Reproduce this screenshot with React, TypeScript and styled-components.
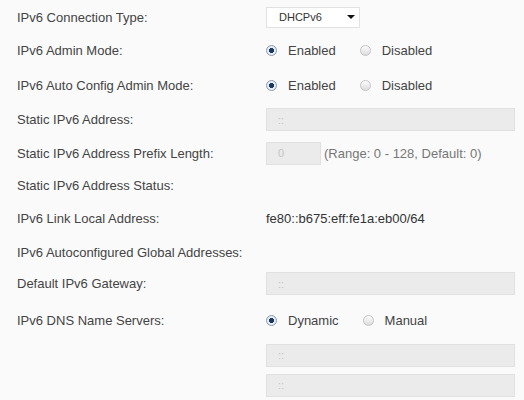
import styled, { createGlobalStyle } from 'styled-components'

const GlobalStyle = createGlobalStyle`
    html, body {
        margin: 0;
        padding: 0;
        background: #fafafa;
    }
    body {
        font-family: "Liberation Sans", Arial, sans-serif;
    }
`

export default function App() {
    return (
        <>
            <GlobalStyle />
            <Form>
                <Row h={34}>
                    <Label>IPv6 Connection Type:</Label>
                    <Select>
                        <span>DHCPv6</span>
                        <Caret />
                    </Select>
                </Row>
                <Row h={33}>
                    <Label>IPv6 Admin Mode:</Label>
                    <RadioGroup>
                        <RadioItem><Radio checked />Enabled</RadioItem>
                        <RadioItem><Radio />Disabled</RadioItem>
                    </RadioGroup>
                </Row>
                <Row h={37}>
                    <Label>IPv6 Auto Config Admin Mode:</Label>
                    <RadioGroup>
                        <RadioItem><Radio checked />Enabled</RadioItem>
                        <RadioItem><Radio />Disabled</RadioItem>
                    </RadioGroup>
                </Row>
                <Row h={31}>
                    <Label>Static IPv6 Address:</Label>
                    <Input w={249}>::</Input>
                </Row>
                <Row h={36}>
                    <Label>Static IPv6 Address Prefix Length:</Label>
                    <Input w={55}>0</Input>
                    <Hint>(Range: 0 - 128, Default: 0)</Hint>
                </Row>
                <Row h={29}>
                    <Label>Static IPv6 Address Status:</Label>
                </Row>
                <Row h={37}>
                    <Label>IPv6 Link Local Address:</Label>
                    <Value>fe80::b675:eff:fe1a:eb00/64</Value>
                </Row>
                <Row h={30}>
                    <Label>IPv6 Autoconfigured Global Addresses:</Label>
                </Row>
                <Row h={33}>
                    <Label>Default IPv6 Gateway:</Label>
                    <Input w={249}>::</Input>
                </Row>
                <Row h={40}>
                    <Label>IPv6 DNS Name Servers:</Label>
                    <RadioGroup>
                        <RadioItem><Radio checked />Dynamic</RadioItem>
                        <RadioItem><Radio />Manual</RadioItem>
                    </RadioGroup>
                </Row>
                <Row h={30}>
                    <Label />
                    <Input w={249}>::</Input>
                </Row>
                <Row h={30}>
                    <Label />
                    <Input w={249}>::</Input>
                </Row>
            </Form>
        </>
    )
}

const Form = styled.div`
    display: flex;
    flex-direction: column;
    padding-left: 17px;
    color: #444;
    font-size: 13px;
`

const Row = styled.div<{ h: number }>`
    display: flex;
    align-items: center;
    height: ${p => p.h}px;
`

const Label = styled.div`
    width: 249px;
    flex-shrink: 0;
`

const Select = styled.div`
    box-sizing: border-box;
    width: 94px;
    height: 21px;
    display: flex;
    align-items: center;
    justify-content: space-between;
    padding: 0 4px 0 12px;
    background: #fff;
    border: 1px solid #e2e2e2;
    color: #333;
    font-size: 11px;
`

const Caret = styled.span`
    width: 0;
    height: 0;
    margin-right: 0;
    border-left: 4px solid transparent;
    border-right: 4px solid transparent;
    border-top: 4px solid #111;
`

const RadioGroup = styled.div`
    display: flex;
    align-items: center;
    gap: 24px;
`

const RadioItem = styled.label`
    display: flex;
    align-items: center;
    gap: 11px;
    color: #444;
`

const Radio = styled.span<{ checked?: boolean }>`
    box-sizing: border-box;
    width: 11px;
    height: 11px;
    border-radius: 50%;
    border: 1px solid ${p => (p.checked ? '#8a9bb0' : '#c4c4c4')};
    background: ${p =>
        p.checked
            ? 'radial-gradient(circle, #1c3a5e 0 2.3px, #e6ecf3 2.8px)'
            : 'linear-gradient(#fdfdfd, #dcdcdc)'};
`

const Input = styled.div<{ w: number }>`
    box-sizing: border-box;
    width: ${p => p.w}px;
    height: 23px;
    display: flex;
    align-items: center;
    padding-left: 11px;
    background: #ebebeb;
    border: 1px solid #e1e1e1;
    color: #c4c4c4;
    font-size: 11px;
    flex-shrink: 0;
`

const Hint = styled.span`
    margin-left: 3px;
    color: #777;
`

const Value = styled.span`
    color: #333;
`
